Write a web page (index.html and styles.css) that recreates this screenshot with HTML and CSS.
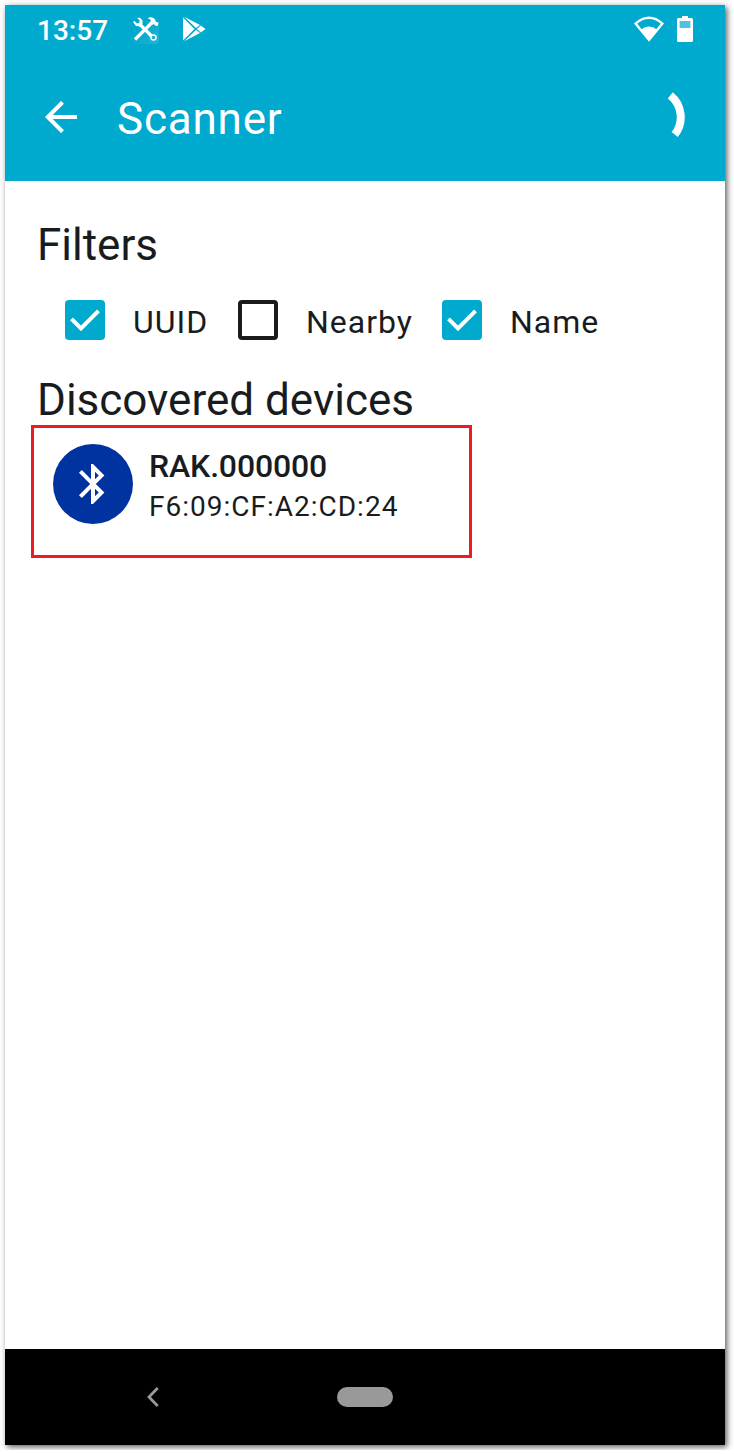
FILE: index.html
```html
<!DOCTYPE html>
<html lang="en">
<head>
<meta charset="utf-8">
<title>Scanner</title>
<link rel="stylesheet" href="styles.css">
</head>
<body>
<div class="phone">
  <div class="status-bar">
    <span class="clock">13:57</span>
    <svg class="tools-icon" width="28" height="28" viewBox="0 0 28 28">
      <defs><linearGradient id="tile" x1="0" y1="0" x2="1" y2="1"><stop offset=".4" stop-color="#fff" stop-opacity="0"/><stop offset="1" stop-color="#fff" stop-opacity=".14"/></linearGradient></defs>
      <rect x="1" y="1" width="26" height="27" rx="4" fill="url(#tile)"/>
      <path d="M8 8.500L20.500 21M3 23.500L18.500 8" stroke="#fff" stroke-width="3.200" fill="none"/>
      <path d="M1 6L2.500 5L5 7.500L7.500 6.500L7.500 4L5 2L8 1.800L10.500 4.500L10.500 8L8 10.500L4 10Z" fill="#fff"/>
      <path d="M15.500 2.500C18 .3 21 1 23 3.500L24 6L26.500 6.500L26 9.500L24 10L21.500 8L19.500 9.500L17 7L19 5L17.800 3Z" fill="#fff"/>
      <circle cx="21.500" cy="21.500" r="2.500" stroke="#fff" stroke-width="1.500" fill="#15add2"/>
    </svg>
    <svg class="play-icon" width="24" height="26" viewBox="0 0 24 26">
      <path d="M1 1.500L12.500 13L1 24.500ZM2.200.8L18 9L14 12ZM2.200 25.200L18 17L14 14ZM18.800 9.400L23.500 13L18.800 16.600L14.800 13Z" fill="#fff"/>
    </svg>
    <svg class="wifi-icon" width="30" height="26" viewBox="0 0 30 26">
      <path d="M1.600 7.600Q15-4 28.400 7.600L15 24Z" fill="none" stroke="#fff" stroke-width="2.300"/>
      <path d="M6.800 13.800Q15 7 23.200 13.800L15 24.500Z" fill="#fff"/>
    </svg>
    <svg class="battery-icon" width="16" height="26" viewBox="0 0 16 26">
      <path d="M5 0H11V2H14.500Q16 2 16 3.500V24.500Q16 26 14.500 26H1.500Q0 26 0 24.500V3.500Q0 2 1.500 2H5Z" fill="#fff"/>
      <rect x="2.600" y="5" width="10.800" height="7" fill="#4dc3df"/>
    </svg>
  </div>
  <header class="app-bar">
    <svg class="back-arrow" width="32" height="32" viewBox="0 0 32 32"><path d="M17.500 1.300L2.800 16L17.500 30.700M2.500 16H32" fill="none" stroke="#fff" stroke-width="4"/></svg>
    <h1 class="title">Scanner</h1>
    <svg class="spinner" width="20" height="46" viewBox="0 0 20 46"><path d="M4.300 3.300A28 28 0 0 1 8.700 42.500" fill="none" stroke="#fff" stroke-width="8"/></svg>
  </header>
  <main class="content">
    <h2 class="heading">Filters</h2>
    <div class="filters">
      <div class="filter uuid"><span class="box checked"><svg width="40" height="40" viewBox="0 0 40 40"><path d="M6.500 18.800L16 28.300L33.500 10.800" fill="none" stroke="#fff" stroke-width="4"/></svg></span><span>UUID</span></div>
      <div class="filter nearby"><span class="box"></span><span>Nearby</span></div>
      <div class="filter name"><span class="box checked"><svg width="40" height="40" viewBox="0 0 40 40"><path d="M6.500 18.800L16 28.300L33.500 10.800" fill="none" stroke="#fff" stroke-width="4"/></svg></span><span>Name</span></div>
    </div>
    <h2 class="heading">Discovered devices</h2>
    <div class="device">
      <span class="avatar">
        <svg width="48" height="48" viewBox="0 0 24 24"><path fill="#fff" d="M17.710 7.710L12 2h-1v7.590L6.410 5 5 6.410 10.590 12 5 17.590 6.410 19 11 14.410V22h1l5.710-5.710-4.300-4.290 4.300-4.290zM13 5.830l1.880 1.880L13 9.590V5.830zm1.880 10.460L13 18.170v-3.760l1.880 1.880z"/></svg>
      </span>
      <div class="device-text">
        <div class="device-name">RAK.000000</div>
        <div class="device-address">F6:09:CF:A2:CD:24</div>
      </div>
    </div>
  </main>
  <nav class="nav-bar">
    <svg class="nav-back" width="12" height="20" viewBox="0 0 12 20"><path d="M10.700 1L2 10L10.700 19" fill="none" stroke="#999" stroke-width="2.800"/></svg>
    <span class="home-pill"></span>
  </nav>
</div>
</body>
</html>
```
FILE: styles.css
```css
* {
  box-sizing: border-box;
}

body {
  margin: 0;
  padding: 5px;
  background: #fff;
  color: #191c1e;
  font-family: Roboto, sans-serif;
}

svg {
  display: block;
  flex: none;
}

.phone {
  display: flex;
  flex-direction: column;
  width: 720px;
  height: 1440px;
  background: #fff;
  box-shadow: 2px 2px 6px rgba(0, 0, 0, 0.65);
}

.status-bar {
  display: flex;
  align-items: flex-start;
  height: 48px;
  padding: 11px 32px 0;
  background: #00a9ce;
  color: #fff;
}

.clock {
  width: 71px;
  margin-top: -1px;
  font-size: 28px;
  font-weight: 500;
  line-height: 32px;
}

.tools-icon {
  margin-left: 24px;
}

.play-icon {
  margin-left: 22px;
}

.wifi-icon {
  margin-left: auto;
}

.battery-icon {
  margin-left: 13px;
}

.app-bar {
  display: flex;
  align-items: center;
  height: 128px;
  padding: 0 39px 0 40px;
  background: #00a9ce;
  color: #fff;
}

.title {
  margin: 3px 0 0 40px;
  font-size: 44px;
  font-weight: 400;
  line-height: 56px;
  letter-spacing: 0.8px;
}

.spinner {
  margin: -5px 0 0 auto;
}

.content {
  flex: 1;
  padding: 36px 26px 0;
}

.heading {
  margin: 0 0 0 6px;
  font-size: 44px;
  font-weight: 400;
  line-height: 56px;
}

.filters {
  display: flex;
  height: 99px;
  padding: 25px 0 0 34px;
}

.filter {
  display: flex;
  gap: 28px;
  height: 48px;
  font-size: 32px;
  line-height: 48px;
  letter-spacing: 1px;
}

.uuid {
  width: 173px;
}

.nearby {
  width: 204px;
}

.box {
  flex: none;
  width: 40px;
  height: 40px;
  margin-top: 2px;
  border: 4px solid #191c1e;
  border-radius: 4px;
}

.box.checked {
  border: 0;
  background: #00a9ce;
}

.device {
  display: flex;
  width: 441px;
  height: 133px;
  margin-top: -3px;
  padding: 16px 19px;
  border: 3px solid #ed1c24;
}

.avatar {
  display: flex;
  align-items: center;
  justify-content: center;
  width: 80px;
  height: 80px;
  border-radius: 50%;
  background: #0033a0;
}

.device-text {
  margin-left: 16px;
}

.device-name {
  font-size: 32px;
  font-weight: 500;
  line-height: 44px;
  letter-spacing: -0.15px;
}

.device-address {
  font-size: 28px;
  line-height: 38px;
  letter-spacing: 1px;
}

.nav-bar {
  display: flex;
  align-items: center;
  height: 96px;
  padding-left: 142px;
  background: #000;
}

.home-pill {
  width: 56px;
  height: 20px;
  margin-left: 178px;
  border-radius: 10px;
  background: #999;
}
```
